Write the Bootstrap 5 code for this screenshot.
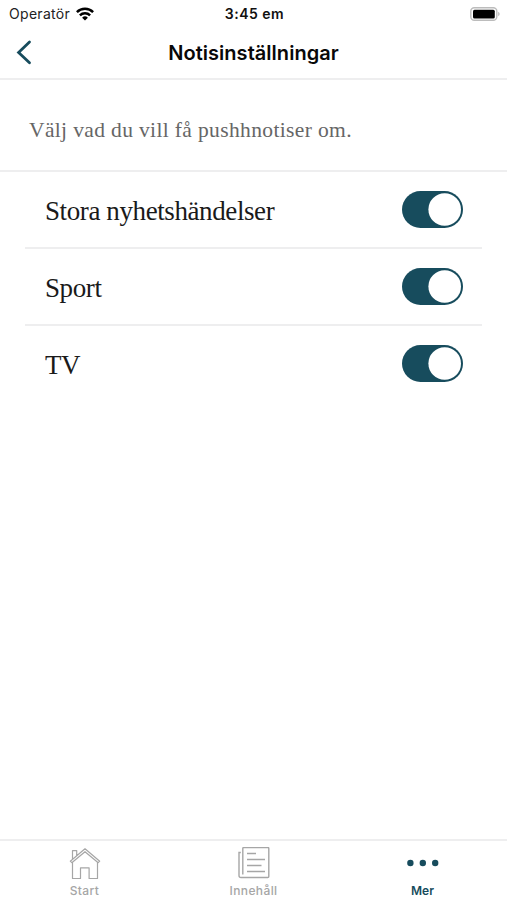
<!DOCTYPE html>
<html lang="sv">
<head>
<meta charset="utf-8">
<meta name="viewport" content="width=device-width, initial-scale=1">
<title>Notisinställningar</title>
<link href="https://cdn.jsdelivr.net/npm/bootstrap@5.3.0/dist/css/bootstrap.min.css" rel="stylesheet">
<style>
  :root { --petrol: #174c5d; --rule: #eeeeef; }
  body { font-family: Inter, "Liberation Sans", sans-serif; background: #fff; color: #111; }
  .app-screen { height: 900px; overflow: hidden; }
  .app-screen svg { display: block; flex: none; }
  .status-bar { height: 28px; font-size: 14px; line-height: 28px; padding: 0 7px 0 9px; }
  .status-bar svg { margin-top: -1px; }
  .status-side { flex: 1 1 0; }
  .carrier { letter-spacing: .3px; color: #222; }
  .wifi { margin-left: 6px; }
  .clock { font-weight: 600; letter-spacing: .5px; }
  .title-bar { height: 52px; border-bottom: 2px solid var(--rule); padding: 0 16px; }
  .title-bar svg { margin-top: -2px; }
  .title-side { flex: 1 1 0; }
  .title-bar h1 { font-size: 20px; font-weight: 600; line-height: 48px; letter-spacing: .03px; color: #080808; }
  .serif-text { font-family: "Liberation Serif", serif; }
  .intro { height: 92px; border-bottom: 2px solid var(--rule); padding: 10px 29px 0; font-size: 21.5px; color: #666; }
  .intro span { letter-spacing: .36px; }
  .options { margin: 0 25px; }
  .option { height: 77px; padding: 0 19px 0 20px; border-bottom: 2px solid var(--rule); font-size: 27px; letter-spacing: -.4px; color: #1a1a1a; }
  .option:last-child { border-bottom-color: transparent; }
  .option label { line-height: 38px; padding-top: 3px; }
  .option .form-check-input { width: 61px; height: 37px; margin: 0; border: 0; box-shadow: none; background-color: #ccc; background-size: 37px 37px; }
  .option .form-check-input:checked { background-color: var(--petrol); background-image: url("data:image/svg+xml,%3csvg xmlns='http://www.w3.org/2000/svg' viewBox='0 0 37 37'%3e%3ccircle cx='18.7' cy='18.5' r='16.3' fill='%23fff'/%3e%3c/svg%3e"); }
  .tab-strip { height: 61px; border-top: 2px solid var(--rule); }
  .tab-strip a { color: #a6a6a6; font-size: 12px; font-weight: 500; line-height: 16px; letter-spacing: .4px; padding-top: 6px; }
  .tab-strip a.active { color: var(--petrol); font-weight: 600; letter-spacing: .1px; }
  .tab-strip svg { margin-bottom: 2px; }
</style>
</head>
<body>
<div class="app-screen d-flex flex-column">
  <div class="status-bar d-flex align-items-center">
    <div class="status-side d-flex align-items-center">
      <span class="carrier">Operatör</span>
      <svg class="wifi" width="18" height="14" viewBox="0 0 18 14" fill="none" stroke="#000" stroke-width="2.5">
        <path d="M.9 5.1a11.6 11.6 0 0 1 16.2 0M3.9 8.3a7.3 7.3 0 0 1 10.2 0"/>
        <path d="M9 13.6 6.1 10.7a4.1 4.1 0 0 1 5.8 0Z" fill="#000" stroke="none"/>
      </svg>
    </div>
    <span class="clock">3:45 em</span>
    <div class="status-side d-flex justify-content-end">
      <svg width="30" height="14" viewBox="0 0 30 14">
        <rect x=".8" y=".8" width="26" height="12.4" rx="3.5" fill="#fff" stroke="#bcbcbc" stroke-width="1.4"/>
        <rect x="3" y="2.7" width="21.8" height="8.7" rx="1.5" fill="#000"/>
        <path d="M28.3 4.8c1.7.8 1.7 3.6 0 4.4Z" fill="#aaa"/>
      </svg>
    </div>
  </div>

  <header class="title-bar d-flex align-items-center">
    <div class="title-side">
      <svg width="16" height="26" viewBox="0 0 16 26" fill="none" stroke="#174c5d" stroke-width="2.8" stroke-linecap="round" stroke-linejoin="miter"><path d="M13.5 3 2.6 13.4 13.5 23.8"/></svg>
    </div>
    <h1 class="m-0">Notisinställningar</h1>
    <div class="title-side"></div>
  </header>

  <main class="flex-grow-1">
    <div class="intro serif-text d-flex align-items-center"><span>Välj vad du vill få pushhnotiser om.</span></div>
    <div class="options">
      <div class="option form-switch d-flex align-items-center justify-content-between">
        <label class="serif-text" for="news">Stora nyhetshändelser</label>
        <input class="form-check-input" type="checkbox" role="switch" id="news" checked>
      </div>
      <div class="option form-switch d-flex align-items-center justify-content-between">
        <label class="serif-text" for="sport">Sport</label>
        <input class="form-check-input" type="checkbox" role="switch" id="sport" checked>
      </div>
      <div class="option form-switch d-flex align-items-center justify-content-between">
        <label class="serif-text" for="tv">TV</label>
        <input class="form-check-input" type="checkbox" role="switch" id="tv" checked>
      </div>
    </div>
  </main>

  <nav class="tab-strip d-flex">
    <a href="#" class="col-4 d-flex flex-column align-items-center text-decoration-none">
      <svg width="32" height="34" viewBox="0 0 32 34" fill="none" stroke="#a6a6a6" stroke-width="1.2" stroke-linejoin="round">
        <path d="M1.3 14.2 16 1.8l14.7 12.4-1.5 1.5L16 4.7 2.8 15.7ZM3.5 12.2V3.6h4.2v5M3.5 15.3v16.2h8V20.8h8.6v10.7h8.4V15.3"/>
      </svg>
      Start
    </a>
    <a href="#" class="col-4 d-flex flex-column align-items-center text-decoration-none">
      <svg width="32" height="34" viewBox="0 0 32 34" fill="none" stroke="#a6a6a6" stroke-width="1.4">
        <path d="M4.800 27.500V1.500q0-1 1-1h24q1 0 1 1v28q0 1-1 1H3q-2 0-2-2V5.500H2.800M9 6.500h9M9 12.500h18M9 18.500h14.500M9 24.500h18"/>
      </svg>
      Innehåll
    </a>
    <a href="#" class="active col-4 d-flex flex-column align-items-center text-decoration-none" aria-current="page">
      <svg width="32" height="34" viewBox="0 0 32 34" fill="#174c5d"><circle cx="3.400" cy="16" r="3.200"/><circle cx="15.800" cy="16" r="3.200"/><circle cx="28.200" cy="16" r="3.200"/></svg>
      Mer
    </a>
  </nav>
</div>
<script src="https://cdn.jsdelivr.net/npm/bootstrap@5.3.0/dist/js/bootstrap.bundle.min.js"></script>
</body>
</html>
